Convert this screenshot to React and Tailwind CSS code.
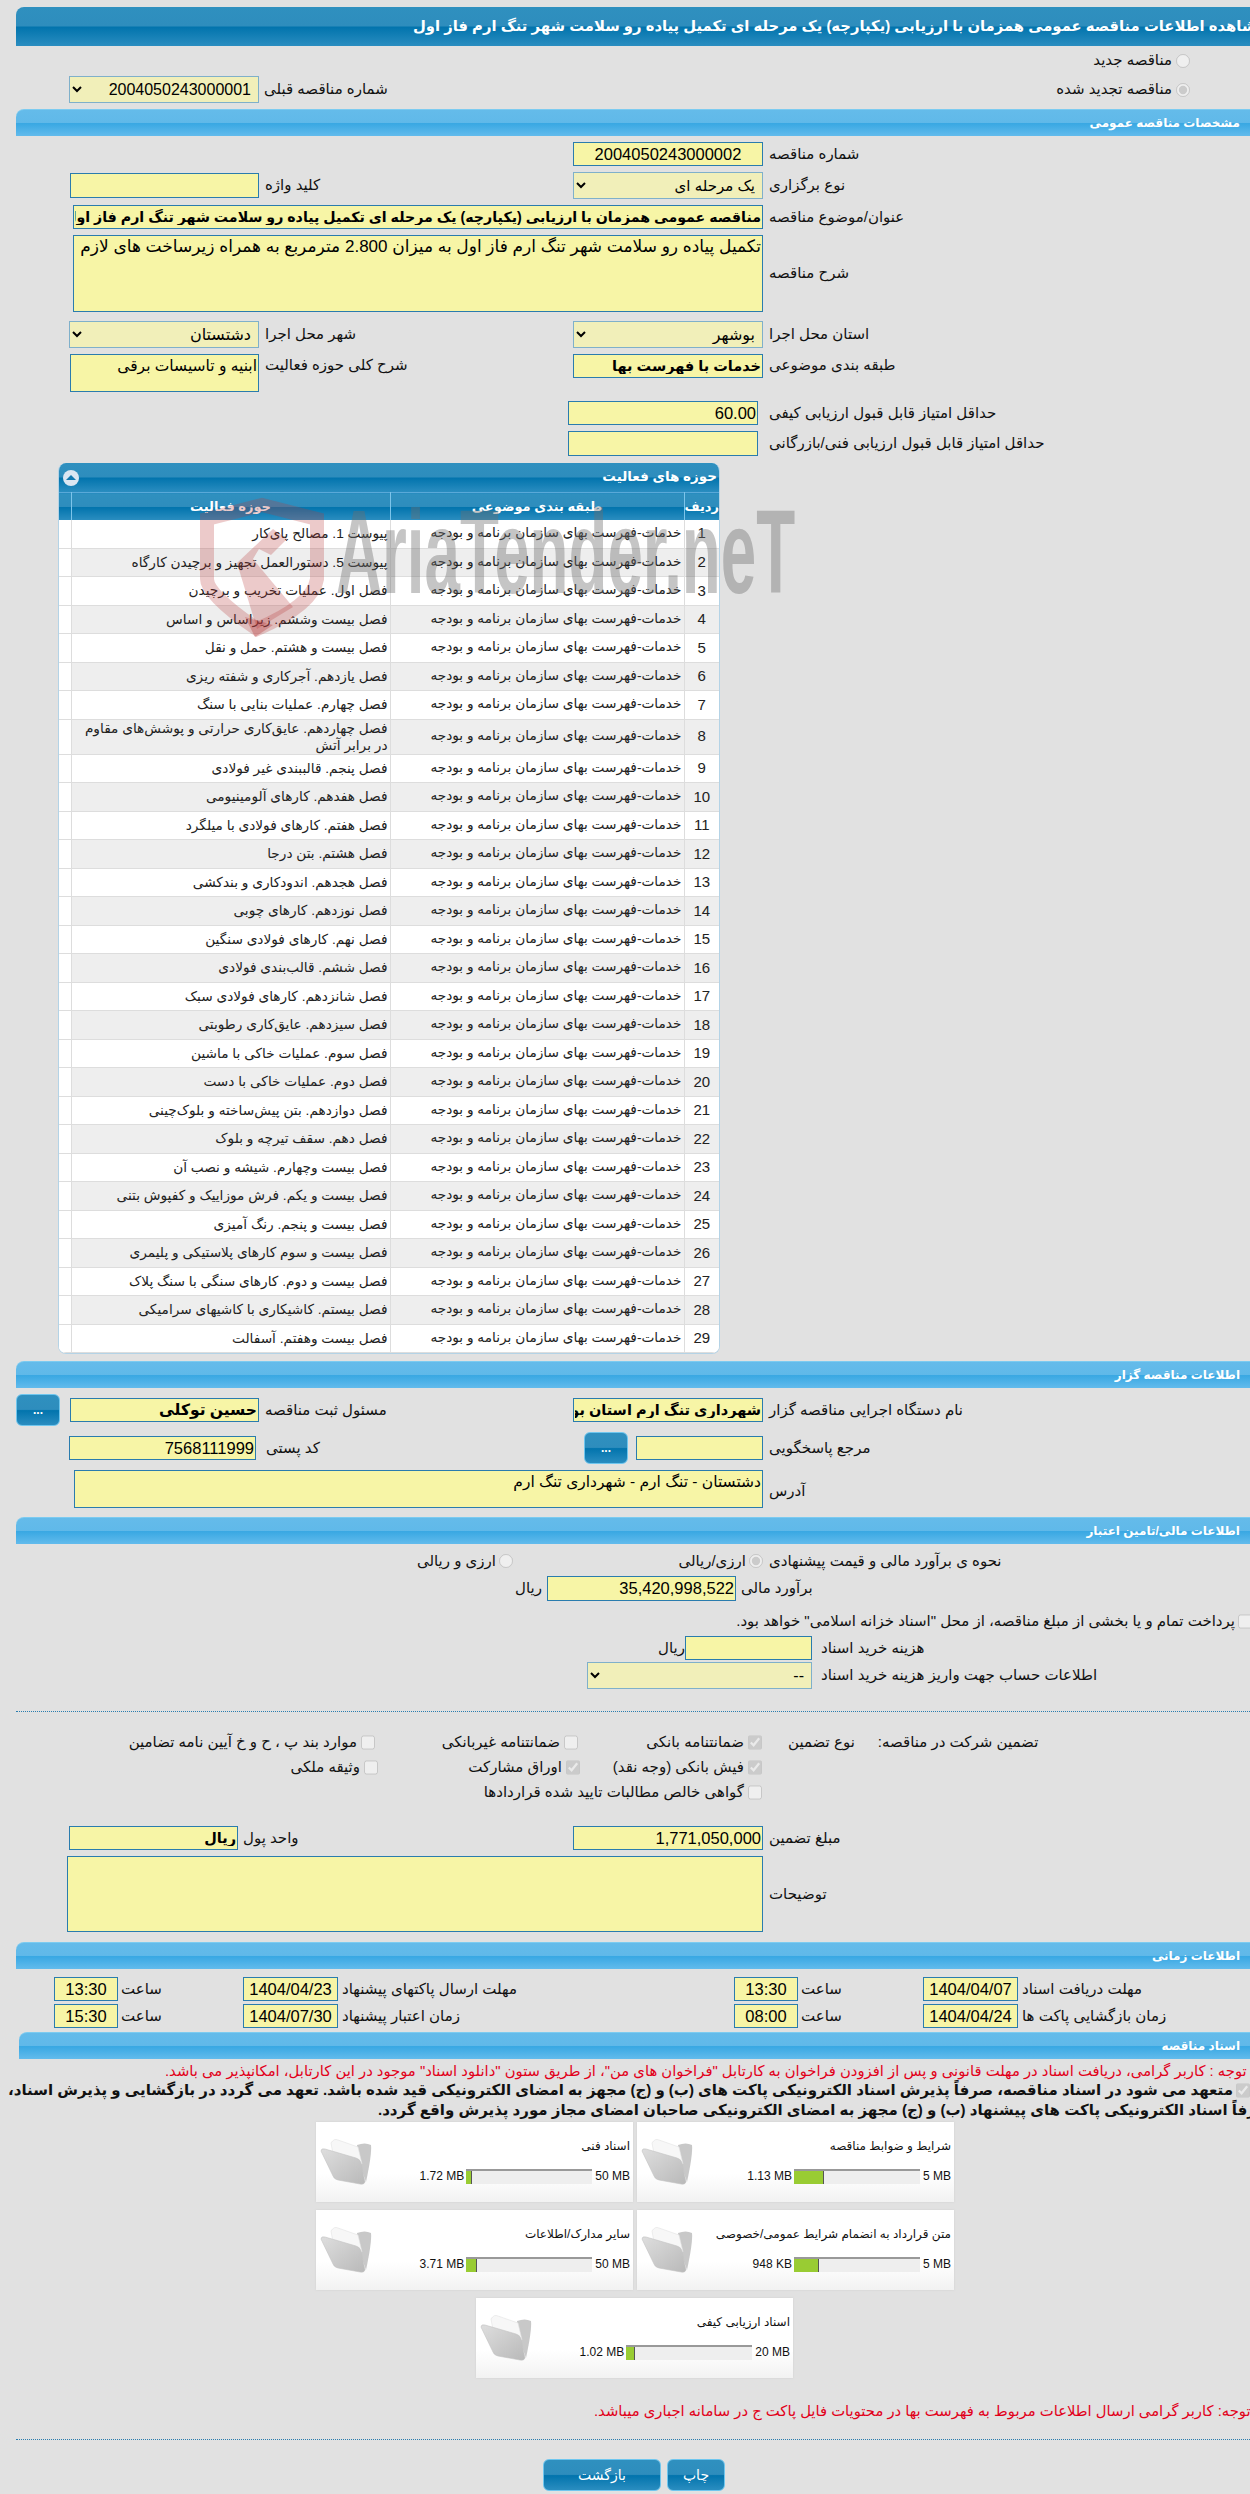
import React from 'react';

const activities = [
  'پیوست 1. مصالح پای‌کار',
  'پیوست 5. دستورالعمل تجهیز و برچیدن کارگاه',
  'فصل اول. عملیات تخریب و برچیدن',
  'فصل بیست وششم. زیراساس و اساس',
  'فصل بیست و هشتم. حمل و نقل',
  'فصل یازدهم. آجرکاری و شفته ریزی',
  'فصل چهارم. عملیات بنایی با سنگ',
  'فصل چهاردهم. عایق‌کاری حرارتی و پوشش‌های مقاوم در برابر آتش',
  'فصل پنجم. قالببندی غیر فولادی',
  'فصل هفدهم. کارهای آلومینیومی',
  'فصل هفتم. کارهای فولادی با میلگرد',
  'فصل هشتم. بتن درجا',
  'فصل هجدهم. اندودکاری و بندکشی',
  'فصل نوزدهم. کارهای چوبی',
  'فصل نهم. کارهای فولادی سنگین',
  'فصل ششم. قالب‌بندی فولادی',
  'فصل شانزدهم. کارهای فولادی سبک',
  'فصل سیزدهم. عایق‌کاری رطوبتی',
  'فصل سوم. عملیات خاکی با ماشین',
  'فصل دوم. عملیات خاکی با دست',
  'فصل دوازدهم. بتن پیش‌ساخته و بلوک‌چینی',
  'فصل دهم. سقف تیرچه و بلوک',
  'فصل بیست وچهارم. شیشه و نصب آن',
  'فصل بیست و یکم. فرش موزاییک و کفپوش بتنی',
  'فصل بیست و پنجم. رنگ آمیزی',
  'فصل بیست و سوم کارهای پلاستیکی و پلیمری',
  'فصل بیست و دوم. کارهای سنگی با سنگ پلاک',
  'فصل بیستم. کاشیکاری با کاشیهای سرامیکی',
  'فصل بیست وهفتم. آسفالت',
];

const darkBg = 'bg-[linear-gradient(#2f90bf_0%,#2e8dbd_48%,#0274ad_52%,#2a8dc0_100%)]';
const lightBg = 'bg-[linear-gradient(#64bbea_0%,#60b9e9_48%,#39a8e3_52%,#62bbec_100%)]';

function SectionBar({ title, className = 'ml-4' }) {
  return (
    <div className={`${lightBg} ${className} flex h-[27px] items-center justify-end rounded-tl-lg border-t border-[#7ccbf0] pr-[10px] text-[12px] font-bold text-white`} dir="ltr">
      <span dir="rtl">{title}</span>
    </div>
  );
}

function Label({ children, className = '' }) {
  return <span dir="rtl" className={`justify-self-start whitespace-nowrap text-[15px] text-[#111] ${className}`}>{children}</span>;
}

function Field({ value = '', className = '' }) {
  return (
    <input
      readOnly
      dir="rtl"
      value={value}
      className={`h-[24px] border border-[#2a7cae] bg-[#f7f5a6] px-px text-[16.5px] text-black outline-none ${className}`}
    />
  );
}

function BoldField({ value = '', size = 'text-[14.5px]', className = '' }) {
  return (
    <input
      readOnly
      dir="rtl"
      value={value}
      className={`h-[24px] border border-[#2a7cae] bg-[#f7f5a6] px-px ${size} font-bold text-black outline-none ${className}`}
    />
  );
}

function Area({ value = '', size = 'text-[15.5px]', className = '' }) {
  return (
    <textarea
      readOnly
      dir="rtl"
      value={value}
      className={`block resize-none border border-[#2a7cae] bg-[#f7f5a6] px-px ${size} leading-[22px] text-black outline-none ${className}`}
    />
  );
}

function Pick({ value, size = 'text-[16px]', className = '' }) {
  return (
    <select disabled dir="rtl" value={value} className={`h-[27px] border border-[#7fb0ca] bg-[#f1efb9] pr-[3px] ${size} ${className}`}>
      <option value={value}>{value}</option>
    </select>
  );
}

function Radio({ checked = false }) {
  return <input type="radio" disabled checked={checked} readOnly className="m-0 size-[14px]" />;
}

function Check({ checked = false }) {
  return <input type="checkbox" disabled checked={checked} readOnly className="m-0 h-[15px] w-[14px]" />;
}

function DotButton({ className = '' }) {
  return (
    <button className={`${darkBg} flex h-[32px] w-[44px] items-center justify-center rounded-md border border-[#6fc6ee] text-[12px] font-bold text-white ${className}`}>...</button>
  );
}

function CheckItem({ label, checked, className = '' }) {
  return (
    <div className={`flex items-center justify-end gap-1 ${className}`}>
      <Label>{label}</Label>
      <Check checked={checked} />
    </div>
  );
}

function Folder() {
  return (
    <svg viewBox="10 17 56 50" className="mt-[15px] ml-[3px] h-[50px] w-[56px] shrink-0">
      <defs>
        <linearGradient id="flap" x1="0" y1="0" x2="1" y2="1">
          <stop offset="0" stopColor="#dedede" />
          <stop offset="1" stopColor="#b9b9b9" />
        </linearGradient>
      </defs>
      <path d="M48 25 Q56 22 62 25 Q63 34 57 62 L50 42 Z" fill="#c8c8c8" />
      <path d="M22 23 Q25 18 29 20 L49 27 L53 44 L24 34 Z" fill="#f7f7f7" stroke="#e2e2e2" strokeWidth="0.6" />
      <path d="M12 31 Q12 28 16 29 L47 38 Q51 39 52 43 L56 62 Q55 65 51 64 L29 60 Q25 59 24 56 Z" fill="url(#flap)" stroke="#c2c2c2" strokeWidth="0.6" />
    </svg>
  );
}

function FileCard({ title, size, max, fill }) {
  return (
    <div className="flex h-[80px] w-[317px] items-start bg-[linear-gradient(#ffffff_0%,#ffffff_65%,#f2f2f2_100%)] shadow-[0_0_2px_#cfcfcf]">
      <Folder />
      <div className="flex-1 pt-[14px] pr-[3px]">
        <div dir="rtl" className="h-[20px] whitespace-nowrap text-[12px] leading-[20px] text-[#111]">{title}</div>
        <div className="mt-[11px] flex items-center justify-end gap-[2px] text-[12px] text-[#111]">
          <span>{size}</span>
          <div className="h-[15px] w-[126px] border-t-2 border-[#999] bg-[#eeeeee]">
            <div className="h-full border-r border-[#555] bg-[#99cc33]" style={{ width: fill }} />
          </div>
          <span className="pl-px">{max}</span>
        </div>
      </div>
    </div>
  );
}

function DateHalf({ date, time, label, className }) {
  return (
    <div className={`flex items-center ${className}`}>
      <Field value={time} className="w-[64px] text-center" />
      <Label className="w-[125px] pl-[3px] text-left">ساعت</Label>
      <Field value={date} className="w-[95px] text-center" />
      <Label className="pl-1">{label}</Label>
    </div>
  );
}

function Watermark() {
  return (
    <div className="pointer-events-none absolute top-[495px] left-[195px]">
      <svg viewBox="0 0 135 146" className="h-[146px] w-[135px]">
        <path d="M12 24 L67 10 L122 24 L122 84 Q118 110 62 134 Q12 100 12 84 Z" fill="none" stroke="#b83a3a" strokeOpacity="0.27" strokeWidth="14" />
        <path d="M42 68 L78 34 L92 44 L76 60 L64 54 L58 64 L98 112 L62 134 Z" fill="#b83a3a" fillOpacity="0.27" />
        <path d="M50 122 L78 130 L60 142 Z" fill="#b83a3a" fillOpacity="0.35" />
      </svg>
      <span dir="ltr" className="absolute top-[-2px] left-[141px] origin-left scale-x-[0.54] text-[118px] leading-[118px] font-bold whitespace-nowrap text-[#6e6e6e]/40">
        AriaTender.neT
      </span>
    </div>
  );
}

export default function App() {
  return (
    <div dir="ltr" className="relative h-[2494px] w-[1250px] overflow-hidden bg-[#e1e1e1] pt-[7px] [font-family:'Liberation_Sans','DejaVu_Sans',sans-serif]">
      {/* title */}
      <div className={`${darkBg} ml-4 flex h-[39px] items-center rounded-tl-lg pl-[397px] text-[14.8px] font-bold whitespace-nowrap text-white`}>
        <span dir="rtl">مشاهده اطلاعات مناقصه عمومی همزمان با ارزیابی (یکپارچه) یک مرحله ای تکمیل پیاده رو سلامت شهر تنگ ارم فاز اول</span>
      </div>

      <div className="flex h-[23px] items-center justify-end gap-[4px] pt-[6px] pr-[60px]">
        <Label>مناقصه جدید</Label>
        <Radio />
      </div>
      <div className="mt-[7px] flex h-[27px] items-center justify-between pr-[60px] pl-[69px]">
        <div className="flex items-center gap-[5px]">
          <Pick value="2004050243000001" className="w-[190px]" />
          <Label>شماره مناقصه قبلی</Label>
        </div>
        <div className="flex items-center gap-[4px]">
          <Label>مناقصه تجدید شده</Label>
          <Radio checked />
        </div>
      </div>

      <div className="mt-[6px]"><SectionBar title="مشخصات مناقصه عمومی" /></div>

      <div className="mt-[6px] grid h-[24px] grid-cols-[259px_250px_254px_1fr] items-center">
        <div /><div />
        <Field value="2004050243000002" className="w-[190px] justify-self-end text-center" />
        <Label className="pl-1.5">شماره مناقصه</Label>
      </div>

      <div className="mt-[6px] grid h-[27px] grid-cols-[259px_250px_254px_1fr] items-center">
        <Field className="h-[25px] w-[189px] justify-self-end" />
        <Label className="pl-1.5">کلید واژه</Label>
        <Pick value="یک مرحله ای" size="text-[15px]" className="w-[190px] justify-self-end text-black" />
        <Label className="pl-1.5">نوع برگزاری</Label>
      </div>

      <div className="mt-[6px] flex h-[24px] items-center pl-[73px]">
        <BoldField value="مناقصه عمومی همزمان با ارزیابی (یکپارچه) یک مرحله ای تکمیل پیاده رو سلامت شهر تنگ ارم فاز اول" size="text-[14.2px]" className="w-[690px]" />
        <Label className="pl-1.5">عنوان/موضوع مناقصه</Label>
      </div>

      <div className="mt-[6px] flex h-[77px] items-center pl-[73px]">
        <Area value="تکمیل پیاده رو سلامت شهر تنگ ارم فاز اول به میزان 2.800 مترمربع به همراه زیرساخت های لازم" size="text-[17px]" className="h-[77px] w-[690px]" />
        <Label className="pl-1.5">شرح مناقصه</Label>
      </div>

      <div className="mt-[9px] grid h-[27px] grid-cols-[259px_250px_254px_1fr] items-center">
        <Pick value="دشتستان" className="w-[190px] justify-self-end" />
        <Label className="pl-1.5">شهر محل اجرا</Label>
        <Pick value="بوشهر" className="w-[190px] justify-self-end" />
        <Label className="pl-1.5">استان محل اجرا</Label>
      </div>

      <div className="mt-[6px] grid h-[38px] grid-cols-[259px_250px_254px_1fr] items-start">
        <Area value="ابنیه و تاسیسات برقی" className="h-[38px] w-[189px] justify-self-end" />
        <Label className="pl-1.5">شرح کلی حوزه فعالیت</Label>
        <BoldField value="خدمات با فهرست بها" className="w-[190px] justify-self-end" />
        <Label className="pl-1.5">طبقه بندی موضوعی</Label>
      </div>

      <div className="mt-[9px] flex h-[24px] items-center pl-[568px]">
        <Field value="60.00" className="w-[190px]" />
        <Label className="pl-[11px]">حداقل امتیاز قابل قبول ارزیابی کیفی</Label>
      </div>
      <div className="mt-[6px] flex h-[25px] items-center pl-[568px]">
        <Field className="h-[25px] w-[190px]" />
        <Label className="pl-[11px]">حداقل امتیاز قابل قبول ارزیابی فنی/بازرگانی</Label>
      </div>

      {/* activity table */}
      <div className="mt-[7px] ml-[58px] w-[662px] overflow-hidden rounded-t-lg rounded-b-lg border-x border-b border-[#b4d3e6] bg-white">
        <div className={`${darkBg} flex h-[29px] items-center justify-between pr-[2px] pl-[4px] text-[13.5px] font-bold text-white`}>
          <span className="flex size-[16px] items-center justify-center rounded-full bg-[#dbe6f2]">
            <span className="h-0 w-0 border-x-[5px] border-b-[5px] border-x-transparent border-b-[#1479b0]" />
          </span>
          <span dir="rtl">حوزه های فعالیت</span>
        </div>
        <table dir="ltr" className="w-full table-fixed border-collapse text-[13.7px] text-[#222]">
          <colgroup>
            <col className="w-[12px]" />
            <col className="w-[319px]" />
            <col className="w-[294px]" />
            <col />
          </colgroup>
          <thead>
            <tr className={`${darkBg} h-[27px] border-t border-[#5aa9d8] text-[13px] font-bold text-white`}>
              <th className="border-r border-[#7cc4ea]" />
              <th dir="rtl" className="border-r border-[#7cc4ea] font-bold">حوزه فعالیت</th>
              <th dir="rtl" className="border-r border-[#7cc4ea] font-bold">طبقه بندی موضوعی</th>
              <th dir="rtl" className="font-bold">ردیف</th>
            </tr>
          </thead>
          <tbody>
            {activities.map((name, i) => (
              <tr key={i} className={`${i === 7 ? 'h-[35px]' : 'h-[28.5px]'} ${i % 2 ? 'bg-[#eeeeee]' : 'bg-white'} border-b border-[#dddddd]`}>
                <td className="border-r border-[#dddddd] bg-white" />
                <td dir="rtl" className="border-r border-[#dddddd] px-[2px] leading-[17px]">{name}</td>
                <td dir="rtl" className="border-r border-[#dddddd] px-[2px] whitespace-nowrap">خدمات-فهرست بهای سازمان برنامه و بودجه</td>
                <td className="text-center text-[15px]">{i + 1}</td>
              </tr>
            ))}
          </tbody>
        </table>
      </div>

      <div className="mt-[7px]"><SectionBar title="اطلاعات مناقصه گزار" /></div>

      <div className="mt-[6px] grid h-[32px] grid-cols-[259px_250px_254px_1fr] items-center">
        <div className="flex items-center justify-between pl-4">
          <DotButton />
          <BoldField value="حسین توکلی" size="text-[15.5px]" className="w-[189px]" />
        </div>
        <Label className="pl-1.5">مسئول ثبت مناقصه</Label>
        <BoldField value="شهرداری تنگ ارم استان بوشهر" className="w-[190px] justify-self-end" />
        <Label className="pl-1.5">نام دستگاه اجرایی مناقصه گزار</Label>
      </div>

      <div className="mt-[6px] grid h-[32px] grid-cols-[256px_253px_254px_1fr] items-center">
        <Field value="7568111999" className="w-[187px] justify-self-end" />
        <Label className="pl-[10px]">کد پستی</Label>
        <div className="flex items-center justify-end gap-[8px]">
          <DotButton />
          <Field className="w-[127px]" />
        </div>
        <Label className="pl-1.5">مرجع پاسخگویی</Label>
      </div>

      <div className="mt-[6px] flex h-[38px] items-center pl-[74px]">
        <Area value="دشتستان - تنگ ارم - شهرداری تنگ ارم" className="h-[38px] w-[689px]" />
        <Label className="pt-[4px] pl-1.5">آدرس</Label>
      </div>

      <div className="mt-[9px]"><SectionBar title="اطلاعات مالی/تامین اعتبار" /></div>

      <div className="mt-[5px] grid h-[24px] grid-cols-[513px_250px_1fr] items-center">
        <div className="flex items-center justify-end gap-[3px]">
          <Label>ارزی و ریالی</Label>
          <Radio />
        </div>
        <div className="flex items-center justify-end gap-[3px]">
          <Label>ارزی/ریالی</Label>
          <Radio checked />
        </div>
        <Label className="pl-1.5">نحوه ی برآورد مالی و قیمت پیشنهادی</Label>
      </div>

      <div className="mt-[3px] flex h-[25px] items-center">
        <div className="flex w-[736px] items-center justify-end gap-[5px]">
          <Label>ریال</Label>
          <Field value="35,420,998,522" className="h-[25px] w-[189px]" />
        </div>
        <Label className="pl-[5px]">برآورد مالی</Label>
      </div>

      <div className="mt-[10px] -mr-[2px] flex h-[20px] items-center justify-end gap-[3px]">
        <Label>پرداخت تمام و یا بخشی از مبلغ مناقصه، از محل "اسناد خزانه اسلامی" خواهد بود.</Label>
        <Check />
      </div>

      <div className="mt-[5px] flex h-[24px] items-center">
        <div className="flex w-[812px] items-center justify-end">
          <Label>ریال</Label>
          <Field className="w-[127px]" />
        </div>
        <Label className="pl-[9px]">هزینه خرید اسناد</Label>
      </div>

      <div className="mt-[2px] flex h-[27px] items-center">
        <div className="flex w-[812px] justify-end">
          <Pick value="--" className="w-[225px]" />
        </div>
        <Label className="pl-[9px]">اطلاعات حساب جهت واریز هزینه خرید اسناد</Label>
      </div>

      <div className="mt-[22px] ml-4 border-t border-dotted border-[#2a7cae]" />

      <div className="mt-[18px] grid h-[25px] grid-cols-[375px_203px_184px_1fr] items-center">
        <CheckItem label="موارد بند پ ، ح و خ آیین نامه تضامین" />
        <CheckItem label="ضمانتنامه غیربانکی" />
        <CheckItem label="ضمانتنامه بانکی" checked />
        <div className="flex gap-[23px] pl-[26px]">
          <Label>نوع تضمین</Label>
          <Label>تضمین شرکت در مناقصه:</Label>
        </div>
      </div>
      <div className="grid h-[25px] grid-cols-[378px_202px_182px_1fr] items-center">
        <CheckItem label="وثیقه ملکی" />
        <CheckItem label="اوراق مشارکت" checked />
        <CheckItem label="فیش بانکی (وجه نقد)" checked />
      </div>
      <div className="grid h-[25px] grid-cols-[762px_1fr] items-center">
        <CheckItem label="گواهی خالص مطالبات تایید شده قراردادها" />
      </div>

      <div className="mt-[21px] grid h-[24px] grid-cols-[238px_325px_200px_1fr] items-center">
        <BoldField value="ریال" className="ml-[69px] w-[169px]" />
        <Label className="pl-[5px]">واحد پول</Label>
        <Field value="1,771,050,000" className="w-[190px] justify-self-end" />
        <Label className="pl-1.5">مبلغ تضمین</Label>
      </div>

      <div className="mt-[6px] flex h-[76px] items-center pl-[67px]">
        <Area className="h-[76px] w-[696px]" />
        <Label className="pl-1.5">توضیحات</Label>
      </div>

      <div className="mt-[10px]"><SectionBar title="اطلاعات زمانی" /></div>

      <div className="mt-[8px] grid h-[24px] grid-cols-2">
        <DateHalf className="pl-[54px]" time="13:30" date="1404/04/23" label="مهلت ارسال پاکتهای پیشنهاد" />
        <DateHalf className="pl-[109px]" time="13:30" date="1404/04/07" label="مهلت دریافت اسناد" />
      </div>
      <div className="mt-[3px] grid h-[24px] grid-cols-2">
        <DateHalf className="pl-[54px]" time="15:30" date="1404/07/30" label="زمان اعتبار پیشنهاد" />
        <DateHalf className="pl-[109px]" time="08:00" date="1404/04/24" label="زمان بازگشایی پاکت ها" />
      </div>

      <div className="mt-[4px]"><SectionBar title="اسناد مناقصه" className="ml-[19px]" /></div>

      <div className="mt-[2px] h-[20px] pl-[165px] text-[14.8px] leading-[20px] whitespace-nowrap text-[#e2001a]">
        <span dir="rtl" className="inline-block">توجه : کاربر گرامی، دریافت اسناد در مهلت قانونی و پس از افزودن فراخوان به کارتابل "فراخوان های من"، از طریق ستون "دانلود اسناد" موجود در این کارتابل، امکانپذیر می باشد.</span>
      </div>
      <div className="flex h-[19px] items-center justify-end gap-[3px] text-[15px] font-bold whitespace-nowrap text-[#111]">
        <span dir="rtl">متعهد می شود در اسناد مناقصه، صرفاً پذیرش اسناد الکترونیکی پاکت های (ب) و (ج) مجهز به امضای الکترونیکی قید شده باشد. تعهد می گردد در بازگشایی و پذیرش اسناد،</span>
        <input type="checkbox" disabled checked readOnly className="m-0 h-[15px] w-[14px] shrink-0" />
      </div>
      <div className="h-[19px] pl-[378px] text-[15px] leading-[19px] font-bold whitespace-nowrap text-[#111]">
        <span dir="rtl" className="inline-block">صرفاً اسناد الکترونیکی پاکت های پیشنهاد (ب) و (ج) مجهز به امضای الکترونیکی صاحبان امضای مجاز مورد پذیرش واقع گردد.</span>
      </div>

      <div className="mt-[3px] flex gap-[4px] pl-[316px]">
        <FileCard title="اسناد فنی" size="1.72 MB" max="50 MB" fill={6} />
        <FileCard title="شرایط و ضوابط مناقصه" size="1.13 MB" max="5 MB" fill={30} />
      </div>
      <div className="mt-[8px] flex gap-[4px] pl-[316px]">
        <FileCard title="سایر مدارک/اطلاعات" size="3.71 MB" max="50 MB" fill={11} />
        <FileCard title="متن قرارداد به انضمام شرایط عمومی/خصوصی" size="948 KB" max="5 MB" fill={25} />
      </div>
      <div className="mt-[8px] flex pl-[476px]">
        <FileCard title="اسناد ارزیابی کیفی" size="1.02 MB" max="20 MB" fill={9} />
      </div>

      <div className="mt-[23px] h-[20px] pl-[594px] text-[14.8px] leading-[20px] whitespace-nowrap text-[#e2001a]">
        <span dir="rtl" className="inline-block">توجه: کاربر گرامی ارسال اطلاعات مربوط به فهرست بها در محتویات فایل پاکت ج در سامانه اجباری میباشد.</span>
      </div>

      <div className="mt-[18px] ml-4 border-t border-dotted border-[#2a7cae]" />

      <div className="mt-[19px] flex gap-[6px] pl-[543px] text-[14px] text-white">
        <button dir="rtl" className={`${darkBg} h-[32px] w-[118px] rounded-md border border-[#6fc6ee]`}>بازگشت</button>
        <button dir="rtl" className={`${darkBg} h-[32px] w-[58px] rounded-md border border-[#6fc6ee]`}>چاپ</button>
      </div>

      <Watermark />
    </div>
  );
}
